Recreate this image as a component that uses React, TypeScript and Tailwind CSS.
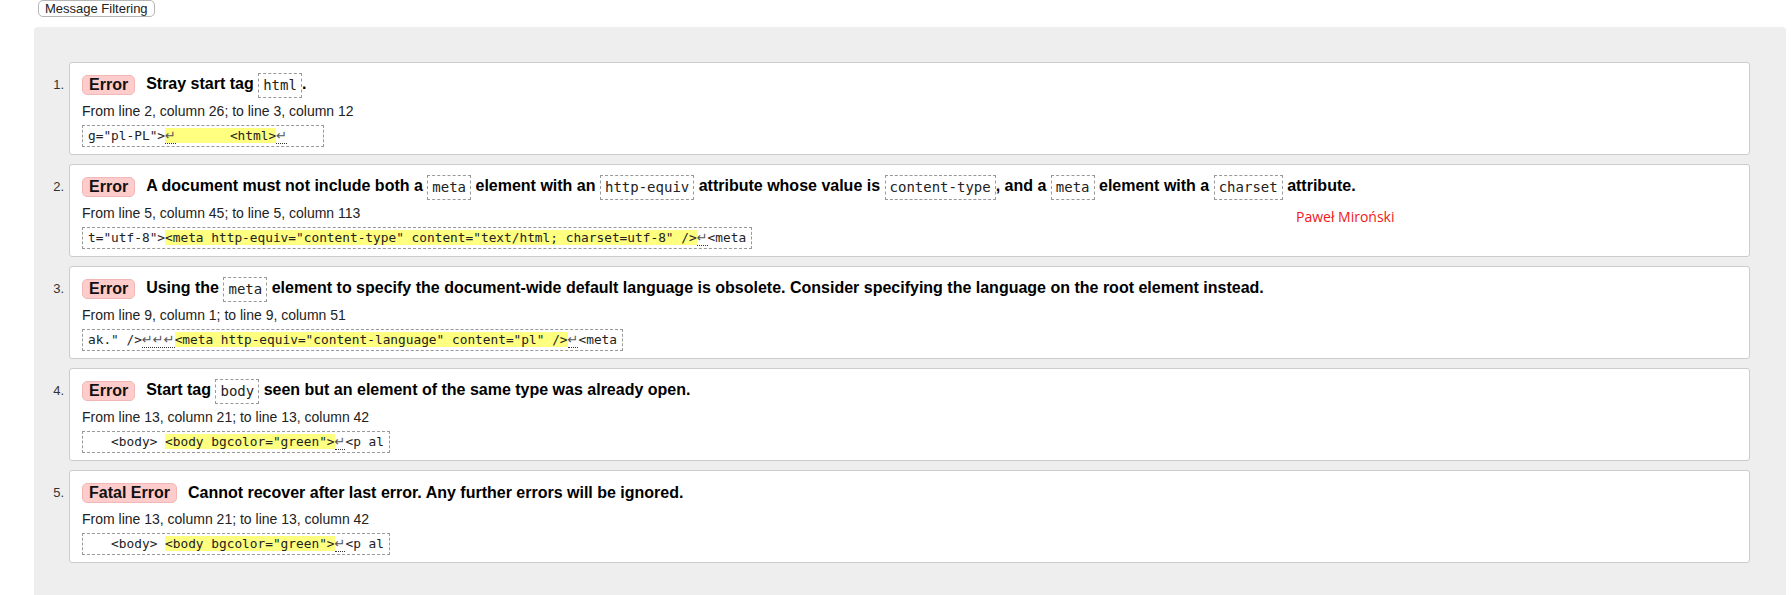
import type { ReactNode } from "react";

type Message = {
  kind: string;
  text: ReactNode;
  location: string;
  extract: ReactNode;
};

function Code({ children }: { children: ReactNode }) {
  return (
    <code className="inline-block align-middle border border-dashed border-[#999] px-[4px] py-[3px] leading-[17px] text-[14px] font-normal text-[#222] font-['DejaVu_Sans_Mono',monospace]">
      {children}
    </code>
  );
}

function Lf({ count = 1 }: { count?: number }) {
  return (
    <span className="border-b border-dotted border-[#333] text-[#555] font-['DejaVu_Sans',sans-serif] text-[13px]">
      {"↵".repeat(count)}
    </span>
  );
}

function Hl({ children }: { children: ReactNode }) {
  return <mark className="bg-[#ffff80] text-[#222]">{children}</mark>;
}

const messages: Message[] = [
  {
    kind: "Error",
    text: (
      <>
        Stray start tag <Code>html</Code>.
      </>
    ),
    location: "From line 2, column 26; to line 3, column 12",
    extract: (
      <>
        {'g="pl-PL">'}
        <Hl>
          <Lf />
          {"       <html>"}
        </Hl>
        <Lf />
        {"    "}
      </>
    ),
  },
  {
    kind: "Error",
    text: (
      <>
        A document must not include both a <Code>meta</Code> element with an <Code>http-equiv</Code> attribute whose
        value is <Code>content-type</Code>, and a <Code>meta</Code> element with a <Code>charset</Code> attribute.
      </>
    ),
    location: "From line 5, column 45; to line 5, column 113",
    extract: (
      <>
        {'t="utf-8">'}
        <Hl>{'<meta http-equiv="content-type" content="text/html; charset=utf-8" />'}</Hl>
        <Lf />
        {"<meta"}
      </>
    ),
  },
  {
    kind: "Error",
    text: (
      <>
        Using the <Code>meta</Code> element to specify the document-wide default language is obsolete. Consider
        specifying the language on the root element instead.
      </>
    ),
    location: "From line 9, column 1; to line 9, column 51",
    extract: (
      <>
        {'ak." />'}
        <Lf count={3} />
        <Hl>{'<meta http-equiv="content-language" content="pl" />'}</Hl>
        <Lf />
        {"<meta"}
      </>
    ),
  },
  {
    kind: "Error",
    text: (
      <>
        Start tag <Code>body</Code> seen but an element of the same type was already open.
      </>
    ),
    location: "From line 13, column 21; to line 13, column 42",
    extract: (
      <>
        {"   <body> "}
        <Hl>{'<body bgcolor="green">'}</Hl>
        <Lf />
        {"<p al"}
      </>
    ),
  },
  {
    kind: "Fatal Error",
    text: <>Cannot recover after last error. Any further errors will be ignored.</>,
    location: "From line 13, column 21; to line 13, column 42",
    extract: (
      <>
        {"   <body> "}
        <Hl>{'<body bgcolor="green">'}</Hl>
        <Lf />
        {"<p al"}
      </>
    ),
  },
];

export default function App() {
  return (
    <div className="min-h-[595px] bg-white font-['Liberation_Sans',Arial,sans-serif] text-[#222]">
      <div className="flex pl-[38px]">
        <button className="h-[17px] rounded-[5px] border border-[#b5b5b5] bg-white px-[6px] text-[13px] leading-[15px] text-[#222]">
          Message Filtering
        </button>
      </div>

      <div className="ml-[34px] mr-[5px] mt-[10px] rounded-t-[4px] bg-[#eeeeee] pt-[35px] pr-[36px] pb-[40px]">
        <ol className="flex flex-col gap-[9px]">
          {messages.map((m, i) => (
            <li key={i} className="flex">
              <span className="w-[35px] shrink-0 pt-[15px] pr-[5px] text-right text-[13px] leading-[16px] text-[#333]">
                {i + 1}.
              </span>
              <div className="relative flex-1 rounded-[3px] border border-[#cccccc] bg-white pt-[9px] pb-[7px] pl-[12px] pr-[12px]">
                <div className="flex h-[25px] items-center">
                  <span className="h-[20px] shrink-0 rounded-[5px] border border-[#f2b8b8] bg-[#ffcccc] px-[6px] text-[16px] font-bold leading-[18px] text-[#111]">
                    {m.kind}
                  </span>
                  <p className="ml-[11px] text-[16px] font-bold leading-[25px] text-black whitespace-nowrap">{m.text}</p>
                </div>
                <p className="mt-[6px] text-[14px] leading-[16px] text-[#222]">{m.location}</p>
                <div className="mt-[6px] flex">
                  <code className="border border-dashed border-[#999] px-[5px] py-[2px] text-[12.8px] leading-[16px] whitespace-pre text-[#222] font-['DejaVu_Sans_Mono',monospace]">
                    {m.extract}
                  </code>
                </div>
                {i === 1 && (
                  <span className="absolute left-[1226px] top-[41px] text-[14px] text-[#f01818] font-['Open_Sans',sans-serif]">
                    Paweł Miroński
                  </span>
                )}
              </div>
            </li>
          ))}
        </ol>
      </div>
    </div>
  );
}
